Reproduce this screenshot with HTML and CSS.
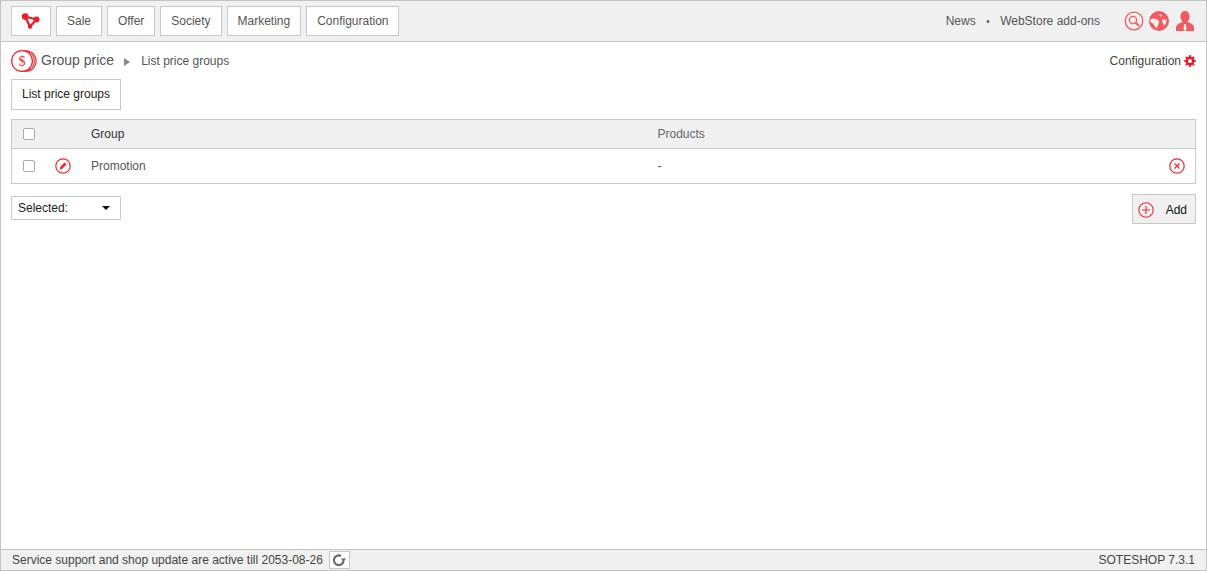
FILE: index.html
```html
<!DOCTYPE html>
<html lang="en">
<head>
    <meta charset="UTF-8">
    <title>Group price</title>
    <link rel="stylesheet" href="styles.css">
</head>
<body>
<div class="frame">

    <!-- top menu -->
    <div class="topbar">
        <nav class="menu">
            <a class="menu-btn logo-btn">
                <svg width="20" height="16" viewBox="0 0 20 16">
                    <path d="M4 3.5L15.5 6.5L9 13.5Z" fill="none" stroke="#ee1c25" stroke-width="2.2"/>
                    <circle cx="4.2" cy="3.6" r="3.3" fill="#ee1c25"/>
                    <circle cx="15.5" cy="6.5" r="3" fill="#ee1c25"/>
                    <circle cx="9" cy="13.5" r="2.2" fill="#ee1c25"/>
                </svg>
            </a>
            <a class="menu-btn">Sale</a>
            <a class="menu-btn">Offer</a>
            <a class="menu-btn">Society</a>
            <a class="menu-btn">Marketing</a>
            <a class="menu-btn">Configuration</a>
        </nav>
        <div class="top-right">
            <a class="top-link">News</a>
            <span class="dot">&bull;</span>
            <a class="top-link">WebStore add-ons</a>
            <div class="top-icons">
                <svg width="20" height="20" viewBox="0 0 20 20">
                    <circle cx="10" cy="10" r="8.8" fill="none" stroke="#f15a60" stroke-width="1.3"/>
                    <circle cx="9" cy="9" r="3.6" fill="none" stroke="#f15a60" stroke-width="1.3"/>
                    <path d="M11.7 11.7L15 15" stroke="#f15a60" stroke-width="1.8"/>
                </svg>
                <svg width="20" height="20" viewBox="0 0 20 20">
                    <circle cx="10" cy="10" r="10" fill="#f15a60"/>
                    <path d="M0.8 9C2.5 7.5 5 7 7 8C9.5 9 11 10.5 9.5 12.5C9 14.5 8.5 16 7.5 17.5C6 15.5 5 13 3 12C1.8 11.3 1 10 0.8 9Z" fill="#f0f0f0"/>
                    <path d="M10.5 3.5C12 3 13 4 12.5 5C11.5 6 10 5 10.5 3.5Z" fill="#f0f0f0"/>
                    <path d="M13 9C14.5 8 16.5 8 17.5 9C17.5 11.5 16.5 13.5 15 15C14.5 13 13 11 13 9Z" fill="#f0f0f0"/>
                </svg>
                <svg class="user-icon" width="18" height="20" viewBox="0 0 18 20">
                    <path d="M9 0C12 0 13.5 2.5 13.5 5.5C13.5 8 12.5 10 11.5 11C14.5 12 18 13.5 18 17V20H0V17C0 13.5 3.5 12 6.5 11C5.5 10 4.5 8 4.5 5.5C4.5 2.5 6 0 9 0Z" fill="#f15a60"/>
                    <path d="M8 13H10L10.4 18.5L9 20L7.6 18.5Z" fill="#f0f0f0"/>
                </svg>
            </div>
        </div>
    </div>

    <div class="content">
        <!-- page title -->
        <div class="title-row">
            <div class="crumbs">
                <svg class="coin" width="26" height="24" viewBox="0 0 26 24">
                    <circle cx="14.8" cy="12" r="10.3" fill="#fff" stroke="#ee2a30" stroke-width="1.1"/>
                    <circle cx="13" cy="12" r="10.4" fill="#fff" stroke="#ee2a30" stroke-width="1"/>
                    <circle cx="11" cy="12" r="10.4" fill="#fff" stroke="#ee2a30" stroke-width="1.3"/>
                    <text x="11" y="16.5" text-anchor="middle" class="coin-text">$</text>
                </svg>
                <span class="crumb-main">Group price</span>
                <span class="crumb-arrow"></span>
                <span class="crumb-sub">List price groups</span>
            </div>
            <a class="config-link">
                Configuration
                <svg width="12" height="12" viewBox="0 0 13 13">
                    <circle cx="6.5" cy="6.5" r="3.4" fill="none" stroke="#ee1c25" stroke-width="2.4"/>
                    <path d="M6.5 0.3V3M6.5 10V12.7M0.3 6.5H3M10 6.5H12.7M2.1 2.1L4 4M9 9L10.9 10.9M2.1 10.9L4 9M9 4L10.9 2.1" stroke="#ee1c25" stroke-width="2.4"/>
                </svg>
            </a>
        </div>

        <div class="tabs">
            <a class="tab">List price groups</a>
        </div>

        <!-- list -->
        <table class="list">
            <thead>
                <tr>
                    <th class="col-check"><span class="check"></span></th>
                    <th class="col-edit"></th>
                    <th class="col-group">Group</th>
                    <th class="col-products">Products</th>
                    <th class="col-del"></th>
                </tr>
            </thead>
            <tbody>
                <tr>
                    <td class="col-check"><span class="check"></span></td>
                    <td class="col-edit">
                        <svg class="row-icon" width="16" height="16" viewBox="0 0 16 16">
                            <circle cx="8" cy="8" r="7.2" fill="none" stroke="#ee2a30" stroke-width="1.2"/>
                            <path d="M4.6 11.4L5.3 8.7L9.6 4.5L11.5 6.4L7.3 10.7Z" fill="#ee2a30"/>
                        </svg>
                    </td>
                    <td>Promotion</td>
                    <td>-</td>
                    <td class="col-del">
                        <svg class="row-icon" width="16" height="16" viewBox="0 0 16 16">
                            <circle cx="8" cy="8" r="7.2" fill="none" stroke="#ee2a30" stroke-width="1.2"/>
                            <path d="M5.5 5.5L10.5 10.5M10.5 5.5L5.5 10.5" stroke="#ee2a30" stroke-width="1.3"/>
                        </svg>
                    </td>
                </tr>
            </tbody>
        </table>

        <div class="actions">
            <div class="select-box">
                <span>Selected:</span>
                <span class="caret"></span>
            </div>
            <a class="add-btn">
                <svg width="16" height="16" viewBox="0 0 16 16">
                    <circle cx="8" cy="8" r="7.2" fill="none" stroke="#ee2a30" stroke-width="1.1"/>
                    <path d="M8 4V12M4 8H12" stroke="#ee2a30" stroke-width="1.1"/>
                </svg>
                <span>Add</span>
            </a>
        </div>
    </div>

    <!-- status bar -->
    <div class="footer">
        <div class="footer-left">
            <span>Service support and shop update are active till 2053-08-26</span>
            <a class="refresh">
                <svg width="14" height="14" viewBox="0 0 14 14">
                    <path d="M11.5 8A4.8 4.8 0 1 1 9 3" fill="none" stroke="#666" stroke-width="2.1"/>
                    <path d="M9 5.5H14L11.5 9Z" fill="#666"/>
                </svg>
            </a>
        </div>
        <span>SOTESHOP 7.3.1</span>
    </div>

</div>
</body>
</html>
```

FILE: styles.css
```css
* {
    box-sizing: border-box;
}
html, body {
    height: 100%;
}
body {
    margin: 0;
    font-family: "Liberation Sans", Arial, sans-serif;
    font-size: 12px;
    color: #555;
    background-color: #fff;
}
svg {
    display: block;
}
.frame {
    height: 100%;
    display: flex;
    flex-direction: column;
    border: 1px solid #c4c4c4;
}

.topbar {
    height: 41px;
    flex: none;
    display: flex;
    justify-content: space-between;
    align-items: center;
    padding: 0 10px;
    background-color: #f0f0f0;
    border-bottom: 1px solid #c4c4c4;
}
.menu {
    display: flex;
    gap: 5px;
}
.menu-btn {
    height: 30px;
    padding: 0 9.96px;
    display: flex;
    align-items: center;
    background-color: #fff;
    border: 1px solid #c8c8c8;
}
.logo-btn {
    width: 40px;
    padding: 0;
    justify-content: center;
}
.top-right {
    display: flex;
    align-items: center;
}
.dot {
    margin: 0 10.5px;
    font-size: 10px;
}
.top-icons {
    display: flex;
    align-items: center;
    gap: 5px;
    margin-left: 24px;
    margin-right: 2px;
}
.user-icon {
    margin-left: 2px;
}

.content {
    flex: 1;
    padding: 7px 10px 0;
}
.title-row {
    height: 24px;
    display: flex;
    justify-content: space-between;
    align-items: center;
}
.crumbs {
    display: flex;
    align-items: center;
}
.coin-text {
    font-family: "Liberation Serif", serif;
    font-size: 14px;
    fill: #ee2a30;
}
.crumb-main {
    margin: 0 0 2px 4px;
    font-size: 14px;
}
.crumb-arrow {
    margin: 2px 11px 0 10px;
    border-left: 6px solid #888;
    border-top: 4px solid transparent;
    border-bottom: 4px solid transparent;
}
.config-link {
    display: flex;
    align-items: center;
    gap: 3px;
    color: #444;
}
.tabs {
    margin-top: 6px;
    display: flex;
}
.tab {
    height: 31px;
    width: 110px;
    padding-bottom: 1px;
    display: flex;
    align-items: center;
    justify-content: center;
    color: #222;
    border: 1px solid #c8c8c8;
}

.list {
    width: 100%;
    margin-top: 9px;
    border-collapse: collapse;
    table-layout: fixed;
    border: 1px solid #c8c8c8;
}
.list th {
    height: 29px;
    padding: 0;
    text-align: left;
    font-weight: normal;
    background-color: #f0f0f0;
    border-bottom: 1px solid #c8c8c8;
}
.list td {
    height: 35px;
    padding: 0;
}
.col-check {
    width: 35px;
    padding-left: 11px !important;
}
.col-edit {
    width: 44.5px;
}
.col-group {
    width: 566.5px;
    color: #333;
}
.col-del {
    width: 30px;
}
.col-products {
    color: #666;
}
.check {
    display: block;
    width: 12px;
    height: 12px;
    background-color: #fff;
    border: 1px solid #aaa;
    border-radius: 2px;
}
.col-edit .row-icon {
    margin-left: 8px;
}
.col-del .row-icon {
    margin-left: 3px;
}

.actions {
    margin-top: 10px;
    display: flex;
    justify-content: space-between;
    align-items: flex-start;
}
.select-box {
    margin-top: 2px;
    width: 110px;
    height: 24px;
    padding: 0 10px 0 6px;
    display: flex;
    align-items: center;
    justify-content: space-between;
    color: #222;
    background-color: #fff;
    border: 1px solid #c8c8c8;
}
.caret {
    border-top: 4px solid #111;
    border-left: 4px solid transparent;
    border-right: 4px solid transparent;
}
.add-btn {
    width: 64px;
    height: 30px;
    padding: 1px 8px 0 5px;
    display: flex;
    align-items: center;
    justify-content: space-between;
    color: #111;
    background-color: #f0f0f0;
    border: 1px solid #c8c8c8;
}

.footer {
    height: 21px;
    flex: none;
    display: flex;
    justify-content: space-between;
    align-items: center;
    padding: 0 11px;
    color: #444;
    background-color: #f0f0f0;
    border-top: 1px solid #c4c4c4;
}
.footer-left {
    display: flex;
    align-items: center;
    gap: 6px;
}
.refresh {
    width: 21px;
    height: 18px;
    display: flex;
    align-items: center;
    justify-content: center;
    background-color: #fff;
    border: 1px solid #c8c8c8;
}
```
